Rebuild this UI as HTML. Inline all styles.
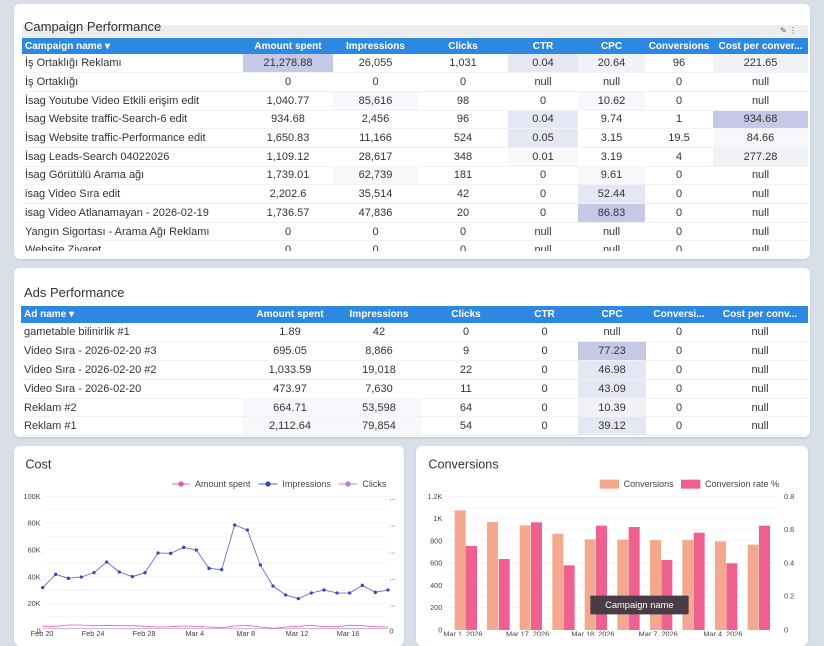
<!DOCTYPE html>
<html><head><meta charset="utf-8"><style>
*{box-sizing:border-box;margin:0;padding:0}
body{width:824px;height:636px;overflow:hidden;background:#d8dfe8;font-family:"Liberation Sans",sans-serif;color:#333;position:relative}
.card{position:absolute;background:#fff;border-radius:6px;box-shadow:0 1px 2px rgba(0,0,0,.12)}
table{border-collapse:collapse;table-layout:fixed;font-size:11px}
th{background:#2d88e2;color:#fff;font-weight:bold;font-size:10px;height:16px;text-align:center;white-space:nowrap;overflow:hidden;text-overflow:ellipsis;padding:0 2px}
th.l{text-align:left;padding-left:3px}
td{text-align:center;white-space:nowrap;overflow:hidden;padding:0 2px;border-bottom:1px solid #f3f3f5}
td.l{text-align:left;padding-left:3px}
.a{background:#c6c8e8}.b{background:#e6e7f5}.c{background:#f1f1f8}.d{background:#f8f8fc}
.t{position:absolute;font-size:13px;color:#333}
</style></head><body>

<div class="card" style="left:14px;top:4px;width:796px;height:255px"></div>
<div style="position:absolute;left:22px;top:25px;width:786px;height:13px;background:#ebedf0"></div>
<div class="t" style="left:24px;top:19px">Campaign Performance</div>
<div style="position:absolute;left:780px;top:26px;font-size:8px;color:#555">✎ ⋮</div>
<div style="position:absolute;left:22px;top:38px;width:786px;height:213px;overflow:hidden">
<table style="width:786px">
<colgroup><col style="width:221px"><col style="width:90px"><col style="width:85px"><col style="width:90px"><col style="width:70px"><col style="width:67px"><col style="width:68px"><col style="width:95px"></colgroup>
<tr><th class="l">Campaign name ▾</th><th>Amount spent</th><th>Impressions</th><th>Clicks</th><th>CTR</th><th>CPC</th><th>Conversions</th><th>Cost per conver...</th></tr>
<tr style="height:18.7px"><td class="l">İş Ortaklığı Reklamı</td><td class="a">21,278.88</td><td>26,055</td><td>1,031</td><td class="b">0.04</td><td class="c">20.64</td><td>96</td><td class="c">221.65</td></tr>
<tr style="height:18.7px"><td class="l">İş Ortaklığı</td><td>0</td><td>0</td><td>0</td><td>null</td><td>null</td><td>0</td><td>null</td></tr>
<tr style="height:18.7px"><td class="l">İsag Youtube Video Etkili erişim edit</td><td>1,040.77</td><td class="d">85,616</td><td>98</td><td>0</td><td class="d">10.62</td><td>0</td><td>null</td></tr>
<tr style="height:18.7px"><td class="l">İsag Website traffic-Search-6 edit</td><td>934.68</td><td>2,456</td><td>96</td><td class="b">0.04</td><td>9.74</td><td>1</td><td class="a">934.68</td></tr>
<tr style="height:18.7px"><td class="l">İsag Website traffic-Performance edit</td><td>1,650.83</td><td>11,166</td><td>524</td><td class="b">0.05</td><td>3.15</td><td>19.5</td><td class="d">84.66</td></tr>
<tr style="height:18.7px"><td class="l">İsag Leads-Search 04022026</td><td>1,109.12</td><td>28,617</td><td>348</td><td class="d">0.01</td><td>3.19</td><td>4</td><td class="c">277.28</td></tr>
<tr style="height:18.7px"><td class="l">İsag Görütülü Arama ağı</td><td>1,739.01</td><td class="d">62,739</td><td>181</td><td>0</td><td class="d">9.61</td><td>0</td><td>null</td></tr>
<tr style="height:18.7px"><td class="l">isag Video Sıra edit</td><td>2,202.6</td><td>35,514</td><td>42</td><td>0</td><td class="b">52.44</td><td>0</td><td>null</td></tr>
<tr style="height:18.7px"><td class="l">isag Video Atlanamayan - 2026-02-19</td><td>1,736.57</td><td>47,836</td><td>20</td><td>0</td><td class="a">86.83</td><td>0</td><td>null</td></tr>
<tr style="height:18.7px"><td class="l">Yangın Sigortası - Arama Ağı Reklamı</td><td>0</td><td>0</td><td>0</td><td>null</td><td>null</td><td>0</td><td>null</td></tr>
<tr style="height:18.7px"><td class="l">Website Ziyaret</td><td>0</td><td>0</td><td>0</td><td>null</td><td>null</td><td>0</td><td>null</td></tr>
</table></div>

<div class="card" style="left:14px;top:268px;width:796px;height:169px"></div>
<div class="t" style="left:24px;top:285px">Ads Performance</div>
<table style="position:absolute;left:21px;top:306px;width:787px">
<colgroup><col style="width:222px"><col style="width:94px"><col style="width:84px"><col style="width:90px"><col style="width:67px"><col style="width:68px"><col style="width:66px"><col style="width:96px"></colgroup>
<tr style="height:17px"><th class="l">Ad name ▾</th><th>Amount spent</th><th>Impressions</th><th>Clicks</th><th>CTR</th><th>CPC</th><th>Conversi...</th><th>Cost per conv...</th></tr>
<tr style="height:18.8px"><td class="l">gametable bilinirlik #1</td><td>1.89</td><td>42</td><td>0</td><td>0</td><td>null</td><td>0</td><td>null</td></tr>
<tr style="height:18.8px"><td class="l">Video Sıra - 2026-02-20 #3</td><td>695.05</td><td>8,866</td><td>9</td><td>0</td><td class="a">77.23</td><td>0</td><td>null</td></tr>
<tr style="height:18.8px"><td class="l">Video Sıra - 2026-02-20 #2</td><td>1,033.59</td><td>19,018</td><td>22</td><td>0</td><td class="b">46.98</td><td>0</td><td>null</td></tr>
<tr style="height:18.8px"><td class="l">Video Sıra - 2026-02-20</td><td>473.97</td><td>7,630</td><td>11</td><td>0</td><td class="b">43.09</td><td>0</td><td>null</td></tr>
<tr style="height:18.8px"><td class="l">Reklam #2</td><td class="d">664.71</td><td class="d">53,598</td><td>64</td><td>0</td><td class="c">10.39</td><td>0</td><td>null</td></tr>
<tr style="height:18.8px"><td class="l">Reklam #1</td><td class="d">2,112.64</td><td class="d">79,854</td><td>54</td><td>0</td><td class="b">39.12</td><td>0</td><td>null</td></tr>
</table>

<div class="card" style="left:14px;top:446px;width:390px;height:200px"></div>
<div class="card" style="left:416px;top:446px;width:392px;height:200px"></div>

<svg style="position:absolute;left:0;top:440px" width="420" height="196" viewBox="0 0 1260 588" font-family="Liberation Sans,sans-serif">
<text x="76" y="86" font-size="38" fill="#333">Cost</text>
<g font-size="27" fill="#444">
<line x1="516" y1="132" x2="570" y2="132" stroke="#e85fb5" stroke-width="3"/><circle cx="543" cy="132" r="8" fill="#e05ab0"/><text x="585" y="141">Amount spent</text>
<line x1="776" y1="132" x2="832" y2="132" stroke="#5060c0" stroke-width="3"/><circle cx="804" cy="132" r="8" fill="#3a4ab0"/><text x="847" y="141">Impressions</text>
<line x1="1016" y1="132" x2="1072" y2="132" stroke="#b88ae6" stroke-width="3"/><circle cx="1044" cy="132" r="8" fill="#b080e0"/><text x="1087" y="141">Clicks</text>
</g>
<g stroke="#eef0f3" stroke-width="2">
<line x1="128" y1="170" x2="1165" y2="170"/><line x1="128" y1="209" x2="1165" y2="209"/><line x1="128" y1="248" x2="1165" y2="248"/><line x1="128" y1="289" x2="1165" y2="289"/><line x1="128" y1="329" x2="1165" y2="329"/><line x1="128" y1="369" x2="1165" y2="369"/><line x1="128" y1="410" x2="1165" y2="410"/><line x1="128" y1="450" x2="1165" y2="450"/><line x1="128" y1="490" x2="1165" y2="490"/><line x1="128" y1="530" x2="1165" y2="530"/>
</g>
<g font-size="22" fill="#444" text-anchor="end">
<text x="122" y="177">100K</text><text x="122" y="256">80K</text><text x="122" y="337">60K</text><text x="122" y="418">40K</text><text x="122" y="498">20K</text><text x="122" y="580">0</text>
</g>
<g font-size="22" fill="#444"><text x="1168" y="180">...</text><text x="1168" y="260">...</text><text x="1168" y="340">...</text><text x="1168" y="420">...</text><text x="1168" y="500">...</text><text x="1168" y="580">0</text></g>
<polyline fill="none" stroke="#5a68c4" stroke-width="2.5" points="128,443 167,403 205,415 244,411 282,398 320,366 358,396 397,410 435,398 474,339 512,340 551,322 589,330 627,385 665,389 704,255 742,270 781,375 819,438 857,465 895,476 934,459 972,450 1011,459 1049,459 1087,436 1126,457 1164,450" stroke-linejoin="round"/>
<g fill="#3a48b0"><circle cx="128" cy="443" r="5"/><circle cx="167" cy="403" r="5"/><circle cx="205" cy="415" r="5"/><circle cx="244" cy="411" r="5"/><circle cx="282" cy="398" r="5"/><circle cx="320" cy="366" r="5"/><circle cx="358" cy="396" r="5"/><circle cx="397" cy="410" r="5"/><circle cx="435" cy="398" r="5"/><circle cx="474" cy="339" r="5"/><circle cx="512" cy="340" r="5"/><circle cx="551" cy="322" r="5"/><circle cx="589" cy="330" r="5"/><circle cx="627" cy="385" r="5"/><circle cx="665" cy="389" r="5"/><circle cx="704" cy="255" r="5"/><circle cx="742" cy="270" r="5"/><circle cx="781" cy="375" r="5"/><circle cx="819" cy="438" r="5"/><circle cx="857" cy="465" r="5"/><circle cx="895" cy="476" r="5"/><circle cx="934" cy="459" r="5"/><circle cx="972" cy="450" r="5"/><circle cx="1011" cy="459" r="5"/><circle cx="1049" cy="459" r="5"/><circle cx="1087" cy="436" r="5"/><circle cx="1126" cy="457" r="5"/><circle cx="1164" cy="450" r="5"/></g>
<polyline fill="none" stroke="#e85fb5" stroke-width="2.5" points="128,559 167,559 205,555 244,555 282,557 320,556 358,557 397,557 435,559 474,561 512,560 551,558 589,559 627,561 665,563 704,558 742,556 781,561 819,565 857,561 895,559 934,556 972,560 1011,560 1049,556 1087,557 1126,560 1164,561"/>
<polyline fill="none" stroke="#b88ae6" stroke-width="2" points="128,566 300,566 500,565 700,566 900,566 1164,565"/>
<g font-size="22" fill="#444"><text x="92" y="588">Feb 20</text><text x="245" y="588">Feb 24</text><text x="398" y="588">Feb 28</text><text x="556" y="588">Mar 4</text><text x="709" y="588">Mar 8</text><text x="857" y="588">Mar 12</text><text x="1010" y="588">Mar 16</text></g>
</svg>

<svg style="position:absolute;left:410px;top:440px" width="414" height="196" viewBox="0 0 1242 588" font-family="Liberation Sans,sans-serif">
<text x="55" y="86" font-size="38" fill="#333">Conversions</text>
<g font-size="27" fill="#444">
<rect x="569" y="119" width="58" height="27" fill="#f4a98f"/><text x="641" y="141">Conversions</text>
<rect x="813" y="119" width="58" height="27" fill="#ee6090"/><text x="885" y="141">Conversion rate %</text>
</g>
<g stroke="#eef0f3" stroke-width="2">
<line x1="105" y1="170" x2="1110" y2="170"/><line x1="105" y1="203" x2="1110" y2="203"/><line x1="105" y1="236" x2="1110" y2="236"/><line x1="105" y1="269" x2="1110" y2="269"/><line x1="105" y1="302" x2="1110" y2="302"/><line x1="105" y1="336" x2="1110" y2="336"/><line x1="105" y1="369" x2="1110" y2="369"/><line x1="105" y1="403" x2="1110" y2="403"/><line x1="105" y1="436" x2="1110" y2="436"/><line x1="105" y1="469" x2="1110" y2="469"/><line x1="105" y1="503" x2="1110" y2="503"/><line x1="105" y1="536" x2="1110" y2="536"/>
</g>
<g font-size="22" fill="#444" text-anchor="end">
<text x="97" y="177">1.2K</text><text x="97" y="243">1K</text><text x="97" y="310">800</text><text x="97" y="377">600</text><text x="97" y="444">400</text><text x="97" y="510">200</text><text x="97" y="577">0</text>
</g>
<g font-size="22" fill="#444"><text x="1122" y="177">0.8</text><text x="1122" y="276">0.6</text><text x="1122" y="377">0.4</text><text x="1122" y="476">0.2</text><text x="1122" y="577">0</text></g>
<g fill="#f4a98f">
<rect x="134" y="211" width="33" height="359"/><rect x="231" y="246" width="33" height="324"/><rect x="329" y="256" width="33" height="314"/><rect x="427" y="281" width="33" height="289"/><rect x="524" y="298" width="33" height="272"/><rect x="622" y="299" width="33" height="271"/><rect x="720" y="300" width="33" height="270"/><rect x="817" y="300" width="33" height="270"/><rect x="915" y="304" width="33" height="266"/><rect x="1013" y="314" width="33" height="256"/>
</g>
<g fill="#ee6090">
<rect x="167" y="318" width="34" height="252"/><rect x="266" y="357" width="33" height="213"/><rect x="363" y="247" width="33" height="323"/><rect x="461" y="376" width="33" height="194"/><rect x="558" y="257" width="33" height="313"/><rect x="656" y="261" width="33" height="309"/><rect x="754" y="360" width="33" height="210"/><rect x="851" y="278" width="33" height="292"/><rect x="949" y="370" width="33" height="200"/><rect x="1047" y="257" width="33" height="313"/>
</g>
<rect x="541" y="467" width="295" height="56" rx="3" fill="#4a3c44"/>
<text x="688" y="504" font-size="28" fill="#fff" text-anchor="middle">Campaign name</text>
<g font-size="22" fill="#444"><text x="100" y="590">Mar 1, 2026</text><text x="288" y="590">Mar 17, 2026</text><text x="484" y="590">Mar 18, 2026</text><text x="686" y="590">Mar 7, 2026</text><text x="880" y="590">Mar 4, 2026</text></g>
</svg>
</body></html>
